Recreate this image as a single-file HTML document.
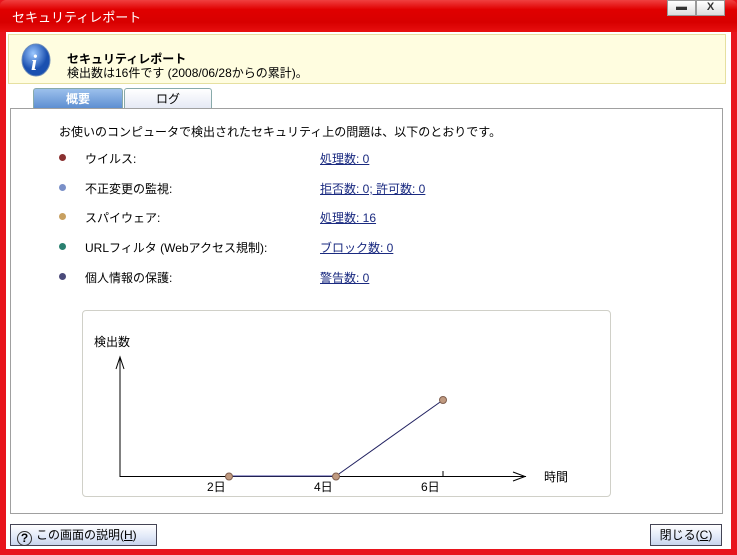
<!DOCTYPE html>
<html><head><meta charset="utf-8"><style>
*{margin:0;padding:0;box-sizing:border-box}
body{width:737px;height:555px;overflow:hidden;background:#e8141c;font-family:"Liberation Sans","Noto Sans CJK JP",sans-serif;font-size:12px;color:#000;position:relative}
.title{position:absolute;left:0;top:0;width:737px;height:32px;background:linear-gradient(#f04040,#e00000 30%,#d80000 70%,#e81010);border-radius:6px 6px 0 0}
.title span{position:absolute;left:12px;top:7px;color:#fff;font-size:13px}
.btn{position:absolute;top:0;height:16px;background:linear-gradient(#fff,#ddd);border:1px solid #999;font-size:11px;text-align:center;font-weight:bold;color:#333}
.win{position:absolute;left:6px;top:32px;width:725px;height:517px;background:#fff}
.hdr{position:absolute;left:2px;top:2px;width:718px;height:50px;background:#fffde0;border:1px solid #e6e0a0}
.tab{position:absolute;top:56px;height:21px;border:1px solid #8aa;border-bottom:none;border-radius:3px 3px 0 0;text-align:center;line-height:20px}
.panel{position:absolute;left:4px;top:76px;width:713px;height:406px;border:1px solid #a0a0a0;background:#fff}
.row{position:absolute;left:0;width:600px}
.dot{position:absolute;left:48px;top:4px;width:7px;height:7px;border-radius:50%}
.lbl{position:absolute;left:74px}
.lnk{position:absolute;left:309px;color:#1a2a80;text-decoration:underline}
.b2{position:absolute;top:492px;height:22px;border:1px solid #445;background:linear-gradient(#fff,#e0e8f8 60%,#c8d4ec);line-height:20px}
</style></head><body>
<div class="title"><span>セキュリティレポート</span>
<div class="btn" style="left:667px;width:29px">▬</div><div class="btn" style="left:696px;width:29px">X</div></div>
<div class="win">
<div class="hdr">
<svg style="position:absolute;left:12px;top:8px" width="32" height="34"><defs><radialGradient id="g" cx="40%" cy="30%"><stop offset="0" stop-color="#9cc8ff"/><stop offset="1" stop-color="#1a50b0"/></radialGradient></defs><ellipse cx="15" cy="17" rx="14" ry="16" fill="url(#g)" stroke="#6a8ab8"/><text x="10" y="27" font-size="22" font-style="italic" font-weight="bold" fill="#fff" font-family="Liberation Serif">i</text></svg>
<div style="position:absolute;left:58px;top:15px;font-weight:bold">セキュリティレポート</div>
<div style="position:absolute;left:58px;top:29px">検出数は16件です (2008/06/28からの累計)。</div>
</div>
<div class="tab" style="left:27px;width:90px;background:linear-gradient(#9cc0ec,#5a8cd0);color:#fff;font-weight:bold">概要</div>
<div class="tab" style="left:118px;width:88px;background:linear-gradient(#fff,#e4e8f4)">ログ</div>
<div class="panel">
<div class="row" style="top:14px;left:48px">お使いのコンピュータで検出されたセキュリティ上の問題は、以下のとおりです。</div>
<div class="row" style="top:41px"><div class="dot" style="background:#8a3030"></div><div class="lbl">ウイルス:</div><div class="lnk">処理数: 0</div></div>
<div class="row" style="top:71px"><div class="dot" style="background:#7a90c8"></div><div class="lbl">不正変更の監視:</div><div class="lnk">拒否数: 0; 許可数: 0</div></div>
<div class="row" style="top:100px"><div class="dot" style="background:#c8a060"></div><div class="lbl">スパイウェア:</div><div class="lnk">処理数: 16</div></div>
<div class="row" style="top:130px"><div class="dot" style="background:#2a8070"></div><div class="lbl">URLフィルタ (Webアクセス規制):</div><div class="lnk">ブロック数: 0</div></div>
<div class="row" style="top:160px"><div class="dot" style="background:#4a4a7a"></div><div class="lbl">個人情報の保護:</div><div class="lnk">警告数: 0</div></div>
<div style="position:absolute;left:71px;top:201px;width:529px;height:187px;border:1px solid #d0d0c8;border-radius:4px"></div>
<svg style="position:absolute;left:0;top:0" width="713" height="406">
<line x1="109" y1="248" x2="109" y2="368" stroke="#000"/><polyline points="105,260 109,248 113,260" fill="none" stroke="#000"/>
<line x1="109" y1="367.5" x2="515" y2="367.5" stroke="#000"/><polyline points="502,363 514,367.5 502,372" fill="none" stroke="#000"/>
<line x1="432" y1="362" x2="432" y2="367" stroke="#000"/>
<line x1="218" y1="367" x2="325" y2="367" stroke="#4040a0"/><line x1="325" y1="367" x2="432" y2="291" stroke="#202060"/>
<circle cx="218" cy="367.5" r="3.5" fill="#c09a80" stroke="#806050"/><circle cx="325" cy="367.5" r="3.5" fill="#c09a80" stroke="#806050"/><circle cx="432" cy="291" r="3.5" fill="#c09a80" stroke="#806050"/>
<text x="83" y="237" font-size="12" font-family="Liberation Sans,Noto Sans CJK JP,sans-serif">検出数</text>
<text x="533" y="372" font-size="12" font-family="Liberation Sans,Noto Sans CJK JP,sans-serif">時間</text>
<text x="196" y="382" font-size="12" font-family="Liberation Sans,Noto Sans CJK JP,sans-serif">2日</text>
<text x="303" y="382" font-size="12" font-family="Liberation Sans,Noto Sans CJK JP,sans-serif">4日</text>
<text x="410" y="382" font-size="12" font-family="Liberation Sans,Noto Sans CJK JP,sans-serif">6日</text>
</svg>
</div>
<div class="b2" style="left:4px;width:147px"><span style="display:inline-block;width:15px;height:15px;border:1px solid #333;border-radius:50%;text-align:center;line-height:13px;font-weight:bold;margin:0 4px 0 6px;vertical-align:-3px">?</span>この画面の説明(<u>H</u>)</div>
<div class="b2" style="left:644px;width:72px;text-align:center">閉じる(<u>C</u>)</div>
</div>
</body></html>
